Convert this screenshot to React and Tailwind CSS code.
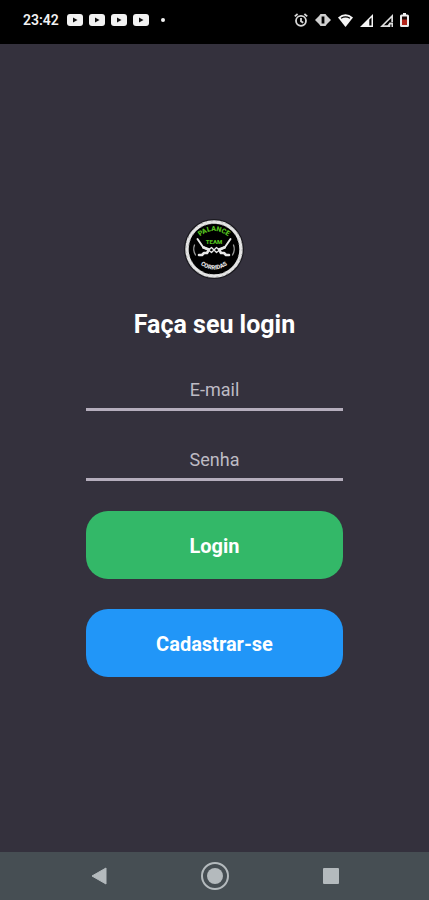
import React, { useState } from 'react';

const VideoIcon = () => (
  <svg width="16" height="12" viewBox="0 0 16 12" aria-hidden="true">
    <rect width="16" height="12" rx="3" fill="#f2f2f2" />
    <path d="M6 3.5v5L10.5 6z" fill="#111" />
  </svg>
);

const StatusBar = () => (
  <header className="flex h-11 shrink-0 items-center justify-between bg-black pb-1 pl-[23px] pr-5 text-[#f2f2f2]">
    <div className="flex items-center gap-2">
      <span className="text-sm font-semibold">23:42</span>
      <div className="flex items-center gap-[6px]">
        <VideoIcon />
        <VideoIcon />
        <VideoIcon />
        <VideoIcon />
      </div>
      <span className="ml-1 size-1 rounded-full bg-[#f2f2f2]" />
    </div>

    <div className="flex items-center gap-[7px]">
      {/* Alarm */}
      <svg width="14" height="14" viewBox="0 0 14 14" fill="none" stroke="#d8d8d8" strokeWidth="1.8">
        <circle cx="7" cy="7.800" r="5" />
        <path d="M7 5v3.2l2.2 1.500M.8 3.400 3.600 1M13.200 3.400 10.400 1" />
      </svg>
      {/* Vibrate */}
      <svg width="16" height="12" viewBox="0 0 16 12">
        <path d="M0 6 4 2l1.500-2h5L12 2l4 4-4 4-1.500 2h-5L4 10z" fill="#cfcfcf" />
        <rect x="6.600" y="2.500" width="2.800" height="7" fill="#000" />
      </svg>
      {/* Wifi */}
      <svg width="15" height="13" viewBox="0 0 15 13">
        <path d="M0 3.500Q7.500-3 15 3.500L7.500 13z" fill="#f5f5f5" />
        <path d="M3 4.300Q7.500 1.600 12 4.300" fill="none" stroke="#000" strokeWidth="1.200" />
      </svg>
      {/* Signal */}
      <svg width="13" height="13" viewBox="0 0 13 13">
        <path d="M13 0v13H0z" fill="#f5f5f5" />
        <path d="M9.300 5.700 11.500 3.500v8H9.300z" fill="#000" />
      </svg>
      {/* Second signal */}
      <svg width="13" height="13" viewBox="0 0 13 13">
        <path d="M13 0v8h-1.700V4L4 11.300h4V13H0z" fill="#dcdcdc" />
        <path d="m6.500 13 3-4.500H13V13h-1.500v-2.500h-1.200V13z" fill="#dcdcdc" />
      </svg>
      {/* Battery */}
      <svg width="9" height="14" viewBox="0 0 9 14">
        <path d="M3 0h3v1.500h1.500Q9 1.500 9 3v9.500Q9 14 7.500 14h-6Q0 14 0 12.500V3q0-1.500 1.500-1.500H3z" fill="#ededed" />
        <rect x="2" y="3.500" width="5" height="4" fill="#1a0705" />
        <rect x="2" y="6.500" width="5" height="5.500" fill="#b3261c" />
      </svg>
    </div>
  </header>
);

const Logo = () => (
  <svg width="60" height="60" viewBox="0 0 60 60" role="img" aria-label="Palance Team">
    <defs>
      <path id="arcTop" d="M13 20Q30 4 47 20" />
      <path id="arcBottom" d="M13 43Q30 58 47 43" />
    </defs>
    <circle cx="30" cy="30" r="30" fill="#1b1a20" />
    <circle cx="30" cy="30" r="27" fill="#000" stroke="#e4e4e4" strokeWidth="3.400" />
    <circle cx="30" cy="30" r="28.300" fill="none" stroke="#8d8d8d" strokeWidth="1" strokeDasharray="2 3 1 4" />
    <circle cx="30" cy="30" r="25.500" fill="none" stroke="#999" strokeWidth="1" strokeDasharray="1 5 2 3" />
    <g className="font-black" textAnchor="middle">
      <text fontSize="7" fill="#54c11f">
        <textPath href="#arcTop" startOffset="50%">PALANCE</textPath>
      </text>
      <text x="30" y="25" fontSize="6" fill="#54c11f">TEAM</text>
      <text fontSize="6" fill="#e2e2e2">
        <textPath href="#arcBottom" startOffset="50%">CORRIDAS</textPath>
      </text>
    </g>
    <g fill="none" stroke="#e8e8e8" strokeLinecap="round" strokeLinejoin="round">
      <path d="M13.500 20 19 28l6 3M46.500 20 41 28l-6 3" strokeWidth="2" />
      <path d="m19.500 28.500 5.500 2-2 3.500h-3l-2 2h-3M40.500 28.500l-5.500 2 2 3.500h3l2 2h3" strokeWidth="2.600" />
      <path d="m25 30.500 2.500-2 5 5 2.500-2M35 30.500l-2.500-2-5 5-2.500-2" strokeWidth="1.300" />
      <path d="M10.500 26q-2 5 1 10M49.500 26q2 5-1 10" stroke="#999" strokeWidth="1.300" />
    </g>
  </svg>
);

const inputClass =
  'h-10 w-full border-b-[3px] border-[#b5aebd] bg-transparent text-center text-lg text-white outline-none placeholder:text-[#bebbc4]';
const buttonClass = 'h-[68px] w-full rounded-[22px] pt-0.5 text-xl font-bold text-white';

const LoginForm = () => {
  const [email, setEmail] = useState('');
  const [password, setPassword] = useState('');

  const handleSubmit = (e) => {
    e.preventDefault();
  };

  return (
    <form onSubmit={handleSubmit} className="mt-[30px] flex w-full flex-col gap-[30px]">
      <input
        type="email"
        aria-label="E-mail"
        placeholder="E-mail"
        value={email}
        onChange={(e) => setEmail(e.target.value)}
        className={inputClass}
      />
      <input
        type="password"
        aria-label="Senha"
        placeholder="Senha"
        value={password}
        onChange={(e) => setPassword(e.target.value)}
        className={inputClass}
      />
      <button type="submit" className={`${buttonClass} bg-[#33b868]`}>
        Login
      </button>
      <button type="button" className={`${buttonClass} bg-[#2196f8]`}>
        Cadastrar-se
      </button>
    </form>
  );
};

const NavigationBar = () => (
  <nav className="flex h-12 shrink-0 items-center justify-center gap-[93px] bg-[#464e53]">
    <button type="button" aria-label="Voltar">
      <svg width="16" height="18" viewBox="0 0 16 18">
        <path d="M15 1v16L1 9z" fill="#b4babd" stroke="#b4babd" strokeLinejoin="round" />
      </svg>
    </button>
    <button type="button" aria-label="Início">
      <svg width="30" height="30" viewBox="0 0 30 30">
        <circle cx="15" cy="15" r="13" fill="none" stroke="#b4babd" strokeWidth="2" />
        <circle cx="15" cy="15" r="8" fill="#b4babd" />
      </svg>
    </button>
    <button type="button" aria-label="Recentes">
      <svg width="16" height="16" viewBox="0 0 16 16">
        <rect width="16" height="16" rx="1" fill="#b4babd" />
      </svg>
    </button>
  </nav>
);

const App = () => (
  <div className="flex min-h-screen flex-col bg-[#34313d] font-['Roboto',sans-serif]">
    <StatusBar />
    <main className="mx-auto flex w-3/5 grow flex-col items-center justify-center">
      <Logo />
      <h1 className="mt-[30px] whitespace-nowrap text-[25px] font-bold leading-8 text-white">Faça seu login</h1>
      <LoginForm />
    </main>
    <NavigationBar />
  </div>
);

export default App;
